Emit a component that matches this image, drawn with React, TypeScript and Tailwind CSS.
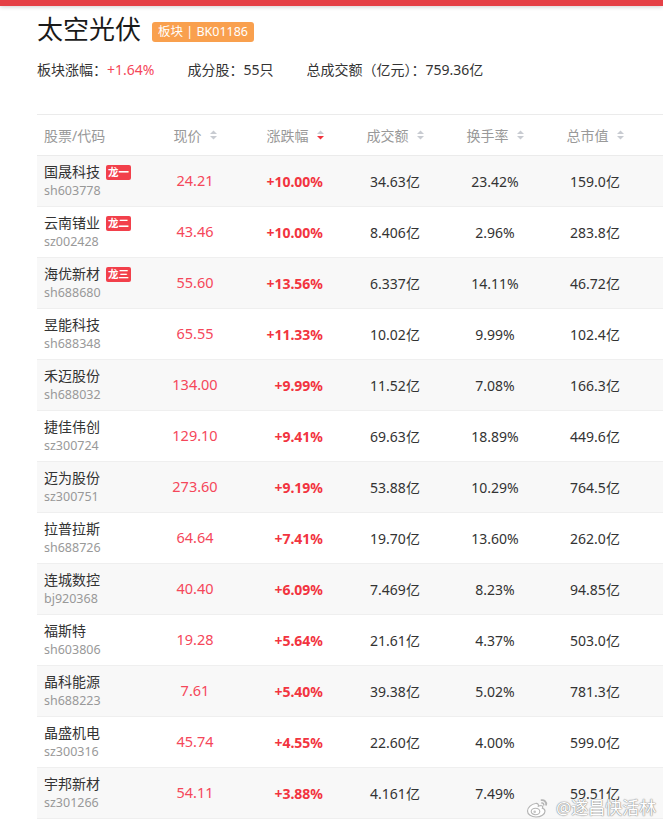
import React from "react";

type Row = {
  name: string;
  code: string;
  price: string;
  change: string;
  amount: string;
  turnover: string;
  mcap: string;
  tag?: string;
};

const rows: Row[] = [
  { name: "国晟科技", code: "sh603778", price: "24.21", change: "+10.00%", amount: "34.63亿", turnover: "23.42%", mcap: "159.0亿", tag: "龙一" },
  { name: "云南锗业", code: "sz002428", price: "43.46", change: "+10.00%", amount: "8.406亿", turnover: "2.96%", mcap: "283.8亿", tag: "龙二" },
  { name: "海优新材", code: "sh688680", price: "55.60", change: "+13.56%", amount: "6.337亿", turnover: "14.11%", mcap: "46.72亿", tag: "龙三" },
  { name: "昱能科技", code: "sh688348", price: "65.55", change: "+11.33%", amount: "10.02亿", turnover: "9.99%", mcap: "102.4亿" },
  { name: "禾迈股份", code: "sh688032", price: "134.00", change: "+9.99%", amount: "11.52亿", turnover: "7.08%", mcap: "166.3亿" },
  { name: "捷佳伟创", code: "sz300724", price: "129.10", change: "+9.41%", amount: "69.63亿", turnover: "18.89%", mcap: "449.6亿" },
  { name: "迈为股份", code: "sz300751", price: "273.60", change: "+9.19%", amount: "53.88亿", turnover: "10.29%", mcap: "764.5亿" },
  { name: "拉普拉斯", code: "sh688726", price: "64.64", change: "+7.41%", amount: "19.70亿", turnover: "13.60%", mcap: "262.0亿" },
  { name: "连城数控", code: "bj920368", price: "40.40", change: "+6.09%", amount: "7.469亿", turnover: "8.23%", mcap: "94.85亿" },
  { name: "福斯特", code: "sh603806", price: "19.28", change: "+5.64%", amount: "21.61亿", turnover: "4.37%", mcap: "503.0亿" },
  { name: "晶科能源", code: "sh688223", price: "7.61", change: "+5.40%", amount: "39.38亿", turnover: "5.02%", mcap: "781.3亿" },
  { name: "晶盛机电", code: "sz300316", price: "45.74", change: "+4.55%", amount: "22.60亿", turnover: "4.00%", mcap: "599.0亿" },
  { name: "宇邦新材", code: "sz301266", price: "54.11", change: "+3.88%", amount: "4.161亿", turnover: "7.49%", mcap: "59.51亿" },
];

function SortIcon({ active }: { active?: boolean }) {
  return (
    <svg width="7" height="10" viewBox="0 0 7 10" className="shrink-0">
      <polygon points="0,4 3.5,0.5 7,4" fill="#c8cbd1" />
      <polygon points="0,6 3.5,9.5 7,6" fill={active ? "#f2323c" : "#c8cbd1"} />
    </svg>
  );
}

function HeadCell({ label, active }: { label: string; active?: boolean }) {
  return (
    <div className="flex items-center justify-center gap-2">
      <span>{label}</span>
      <SortIcon active={active} />
    </div>
  );
}

function WeiboLogo() {
  return (
    <svg width="24" height="22" viewBox="0 0 24 22">
      <path
        d="M9.5 6.5c-4 0.5-8 4-8 7.5 0 3.5 4 6 8.5 6 5 0 9-2.8 9-5.8 0-1.8-1.6-2.6-2.6-2.9 0.6-1.3 0.6-2.7-1.4-2.8-1.3 0-2.6 0.6-2.6 0.6 0.4-1.6-0.4-3-2.9-2.6z"
        fill="#ffffff"
        stroke="#b5b5b5"
        strokeWidth="1.2"
      />
      <ellipse cx="9.5" cy="14.5" rx="4.3" ry="3.2" fill="#ffffff" stroke="#b5b5b5" strokeWidth="1.1" />
      <circle cx="8.7" cy="14.8" r="1.3" fill="#c4c4c4" />
      <path d="M15.5 3.2c2.6-0.5 5.2 1.8 4.6 4.6" fill="none" stroke="#b5b5b5" strokeWidth="1.8" strokeLinecap="round" />
      <path d="M15.8 6c1.2-0.2 2.2 0.8 2 2" fill="none" stroke="#b5b5b5" strokeWidth="1.4" strokeLinecap="round" />
    </svg>
  );
}

export default function App() {
  return (
    <div className="relative w-[663px] h-[827px] overflow-hidden bg-white font-['Noto_Sans','Noto_Sans_CJK_SC',sans-serif] text-[#333]">
      <div className="h-[6px] bg-[#e54046] shadow-[0_1px_4px_rgba(0,0,0,0.18)]" />

      <div className="pl-[37px]">
        <div className="mt-[5px] flex h-[36px] items-center gap-[11px]">
          <h1 className="text-[26px] leading-[36px] font-normal text-[#1a1a1a]">太空光伏</h1>
          <span className="mt-[5px] flex h-[20px] items-center rounded-[3px] bg-[#f9a04e] px-[6px] text-[12.5px] leading-[20px] text-white">
            板块 | BK01186
          </span>
        </div>

        <div className="mt-[13px] flex h-[20px] items-center gap-[33px] text-[14px] leading-[20px] text-[#333]">
          <span>
            板块涨幅：<span className="text-[#f5475a]">+1.64%</span>
          </span>
          <span>成分股：55只</span>
          <span>总成交额（亿元）：759.36亿</span>
        </div>

        <div className="mt-[34px]">
          <div className="grid h-[42px] grid-cols-[108px_100px_100px_100px_100px_100px_1fr] items-center border-y border-[#ebebeb] text-[14px] text-[#999]">
            <div className="pl-[7px]">股票/代码</div>
            <HeadCell label="现价" />
            <HeadCell label="涨跌幅" active />
            <HeadCell label="成交额" />
            <HeadCell label="换手率" />
            <HeadCell label="总市值" />
            <div />
          </div>

          {rows.map((r, i) => (
            <div
              key={r.code}
              className={`grid h-[51px] grid-cols-[108px_100px_100px_100px_100px_100px_1fr] items-center border-b border-[#efefef] ${
                i % 2 === 0 ? "bg-[#f8f8f8]" : "bg-white"
              }`}
            >
              <div className="flex flex-col pl-[7px]">
                <div className="flex h-[20px] items-center gap-[6px] text-[14px] leading-[20px] text-[#333]">
                  <span>{r.name}</span>
                  {r.tag && (
                    <span className="flex h-[15px] items-center rounded-[2px] bg-[#f2404b] px-[2px] text-[10.5px] font-bold leading-[15px] text-white">
                      {r.tag}
                    </span>
                  )}
                </div>
                <div className="h-[18px] text-[12.5px] leading-[18px] text-[#999]">{r.code}</div>
              </div>
              <div className="text-center text-[14.5px] text-[#f5475a]">{r.price}</div>
              <div className="pr-[22px] text-right text-[14px] font-bold text-[#f2343f]">{r.change}</div>
              <div className="text-center text-[14px] text-[#333]">{r.amount}</div>
              <div className="text-center text-[14px] text-[#333]">{r.turnover}</div>
              <div className="text-center text-[14px] text-[#333]">{r.mcap}</div>
              <div />
            </div>
          ))}
        </div>
      </div>

      <div className="absolute left-[526px] top-[796px] flex items-center gap-[6px]">
        <WeiboLogo />
        <span className="text-[17px] leading-[24px] text-white [text-shadow:0_0_1px_#8a8a8a,0_0_1px_#8a8a8a,0_0_2px_rgba(0,0,0,0.25)]">
          @遂昌快活林
        </span>
      </div>
    </div>
  );
}
